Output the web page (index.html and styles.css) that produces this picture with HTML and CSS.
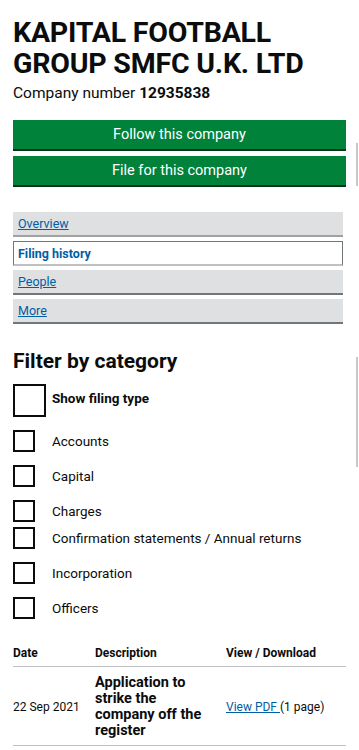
FILE: index.html
```html
<!DOCTYPE html>
<html lang="en">
<head>
    <meta charset="UTF-8">
    <meta name="viewport" content="width=device-width, initial-scale=1.0">
    <title>Filing history</title>
    <link rel="stylesheet" href="styles.css">
</head>
<body>
    <div id="page">
        <h1 class="company-name">KAPITAL FOOTBALL GROUP SMFC U.K. LTD</h1>
        <p class="company-number">Company number <strong>12935838</strong></p>

        <div class="actions">
            <a class="button" href="#">Follow this company</a>
            <a class="button" href="#">File for this company</a>
        </div>

        <ul class="tabs">
            <li class="tab"><a href="#">Overview</a></li>
            <li class="tab tab-active"><a href="#">Filing history</a></li>
            <li class="tab tab-dark"><a href="#">People</a></li>
            <li class="tab tab-dark"><a href="#">More</a></li>
        </ul>

        <h2 class="filter-title">Filter by category</h2>
        <div class="filters">
            <label class="check check-large"><span class="box"></span><span>Show filing type</span></label>
            <label class="check gap-lg"><span class="box"></span><span>Accounts</span></label>
            <label class="check gap-lg"><span class="box"></span><span>Capital</span></label>
            <label class="check gap-lg"><span class="box"></span><span>Charges</span></label>
            <label class="check gap-sm"><span class="box"></span><span>Confirmation statements / Annual returns</span></label>
            <label class="check gap-lg"><span class="box"></span><span>Incorporation</span></label>
            <label class="check gap-lg"><span class="box"></span><span>Officers</span></label>
        </div>

        <table class="filings">
            <thead>
                <tr>
                    <th class="col-date">Date</th>
                    <th class="col-desc">Description</th>
                    <th>View / Download</th>
                </tr>
            </thead>
            <tbody>
                <tr>
                    <td>22 Sep 2021</td>
                    <td class="desc">Application to strike the company off the register</td>
                    <td><a href="#">View PDF </a>(1 page)</td>
                </tr>
            </tbody>
        </table>
    </div>

    <div class="scroll-mark mark-top"></div>
    <div class="scroll-mark mark-mid"></div>
</body>
</html>
```

FILE: styles.css
```css
body {
    margin: 0;
    font-family: Roboto, "Noto Sans", Arial, sans-serif;
    color: #0b0c0c;
    background: #fff;
}
#page {
    padding: 17px 13px 0 13px;
}
.company-name {
    margin: 0;
    font-size: 28.5px;
    line-height: 31px;
    font-weight: 700;
    padding-right: 20px;
    letter-spacing: -0.2px;
}
.company-number {
    margin: 4px 0 0 0;
    font-size: 15.5px;
    line-height: 20px;
}
.company-number strong {
    font-weight: 700;
}
.actions {
    margin-top: 17px;
    display: flex;
    flex-direction: column;
    gap: 5px;
}
.button {
    display: block;
    background: #00823b;
    border-bottom: 2px solid #003618;
    color: #fff;
    text-align: center;
    text-decoration: none;
    font-size: 14.5px;
    line-height: 29px;
    height: 29px;
}
.tabs {
    list-style: none;
    margin: 25px 0 0 0;
    padding: 0;
    width: 330px;
    display: flex;
    flex-direction: column;
    gap: 4px;
}
.tab {
    background: #dee0e2;
    border-bottom: 2px solid #a1a1a1;
    height: 23px;
    padding-left: 5px;
    font-size: 12.5px;
    line-height: 23px;
}
.tab a {
    color: #005ea5;
}
.tab-dark {
    border-bottom-color: #6f777b;
}
.tab-active {
    background: #fff;
    border: 1px solid #6f777b;
    border-bottom: 2px solid #bfc1c3;
    height: 22px;
    padding-left: 4px;
}
.tab-active a {
    text-decoration: none;
    font-weight: 700;
}
.filter-title {
    margin: 24px 0 0 0;
    font-size: 21px;
    line-height: 26px;
    font-weight: 700;
}
.filters {
    margin-top: 10px;
    display: flex;
    flex-direction: column;
}
.check {
    display: flex;
    align-items: center;
    gap: 17px;
    font-size: 13.5px;
    line-height: 22px;
}
.check .box {
    width: 18px;
    height: 18px;
    border: 2px solid #0b0c0c;
    flex: none;
}
.check-large {
    gap: 6px;
    font-weight: 700;
    align-items: flex-start;
}
.check-large .box {
    width: 29px;
    height: 29px;
}
.check-large span:last-child {
    line-height: 28px;
}
.gap-lg {
    margin-top: 13px;
}
.gap-sm {
    margin-top: 5px;
}
.filings {
    margin-top: 21px;
    width: 333px;
    border-collapse: collapse;
    font-size: 12px;
}
.filings th {
    text-align: left;
    font-weight: 700;
    padding: 6px 0 6px 0;
    border-bottom: 1px solid #bfc1c3;
}
.col-date {
    width: 82px;
}
.col-desc {
    width: 131px;
}
.filings td {
    padding: 8px 0 6px 0;
    border-bottom: 1px solid #bfc1c3;
    vertical-align: middle;
}
.filings .desc {
    font-size: 14.5px;
    line-height: 16px;
    font-weight: 700;
    padding-right: 10px;
}
.filings td a {
    color: #005ea5;
}
.scroll-mark {
    position: absolute;
    left: 356px;
    width: 2px;
    background: #c8c8c8;
}
.mark-top {
    top: 143px;
    height: 43px;
}
.mark-mid {
    top: 357px;
    height: 110px;
}
```
